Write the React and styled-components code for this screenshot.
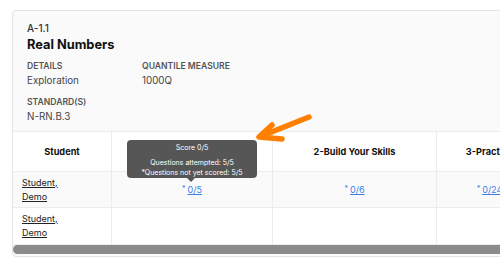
import React from "react";
import styled, { createGlobalStyle } from "styled-components";

const Global = createGlobalStyle`
  html, body { margin: 0; padding: 0; background: #fff; }
  body { font-family: Inter, "Liberation Sans", Arial, sans-serif; color: #1a1a1a; overflow: hidden; }
`;

const Page = styled.div`
  padding: 10px 0 0 12px;
  width: 500px;
  height: 258px;
  box-sizing: border-box;
  position: relative;
  overflow: hidden;
`;

const Card = styled.div`
  width: 540px;
  border: 1px solid #e4e4e4;
  border-radius: 4px;
  background: #fafafa;
  overflow: hidden;
`;

const Header = styled.div`
  padding: 11px 15px 0 14px;
  height: 120px;
  box-sizing: border-box;
`;

const Code = styled.div`
  font-size: 10px;
  font-weight: 500;
  color: #333;
  line-height: 13px;
`;

const Title = styled.h1`
  margin: 1px 0 0;
  font-size: 12.8px;
  font-weight: 700;
  color: #111;
  line-height: 18px;
`;

const MetaGrid = styled.div`
  display: grid;
  grid-template-columns: 115px 140px;
  row-gap: 7px;
  margin-top: 6px;
`;

const Meta = styled.div`
  display: flex;
  flex-direction: column;
`;

const Label = styled.div`
  font-size: 8.6px;
  font-weight: 600;
  color: #555;
  line-height: 12px;
`;

const Value = styled.div`
  font-size: 9.8px;
  color: #444;
  line-height: 17px;
`;

const Table = styled.div`
  display: grid;
  grid-template-columns: 99px 161px 164px 106px;
  background: #fff;
  border-top: 1px solid #ececec;
`;

const Cell = styled.div`
  height: ${(p) => p.h}px;
  box-sizing: border-box;
  border-right: 1px solid #ececec;
  border-bottom: 1px solid #ececec;
  background: ${(p) => (p.shade ? "#fafafa" : "#fff")};
  display: flex;
  align-items: center;
  justify-content: ${(p) => (p.left ? "flex-start" : "center")};
  padding: ${(p) => (p.left ? "0 9px" : "0")};
`;

const HeadText = styled.span`
  font-size: 9.2px;
  font-weight: 700;
  color: #111;
  white-space: nowrap;
`;

const StudentLink = styled.a`
  font-size: 9px;
  color: #222;
  text-decoration: underline;
  line-height: 14px;
`;

const Score = styled.span`
  font-size: 9px;
  color: #3d7ee6;
  white-space: nowrap;
`;

const Star = styled.span`
  font-size: 7px;
  vertical-align: 2px;
  margin-right: 2px;
`;

const ScoreLink = styled.a`
  text-decoration: underline;
`;

const ScrollBar = styled.div`
  height: 9px;
  margin: 0 0 2px 0;
  border-radius: 5px;
  background: #8b8b8b;
`;

const Tooltip = styled.div`
  position: absolute;
  left: 127px;
  top: 140px;
  width: 130px;
  height: 38px;
  box-sizing: border-box;
  background: #565656;
  border-radius: 4px;
  color: #fff;
  font-size: 7px;
  text-align: center;
  line-height: 10px;
  padding-top: 3px;
  &::after {
    content: "";
    position: absolute;
    left: 60px;
    bottom: -4px;
    border-left: 4px solid transparent;
    border-right: 4px solid transparent;
    border-top: 4px solid #565656;
  }
`;

const Gap = styled.div`
  height: 5px;
`;

const Arrow = styled.svg`
  position: absolute;
  left: 250px;
  top: 105px;
`;

export default function App() {
  return (
    <Page>
      <Global />
      <Card>
        <Header>
          <Code>A-1.1</Code>
          <Title>Real Numbers</Title>
          <MetaGrid>
            <Meta>
              <Label>DETAILS</Label>
              <Value>Exploration</Value>
            </Meta>
            <Meta>
              <Label>QUANTILE MEASURE</Label>
              <Value>1000Q</Value>
            </Meta>
            <Meta>
              <Label>STANDARD(S)</Label>
              <Value>N-RN.B.3</Value>
            </Meta>
          </MetaGrid>
        </Header>
        <Table>
          <Cell h={40}><HeadText>Student</HeadText></Cell>
          <Cell h={40}><HeadText>1-Explore</HeadText></Cell>
          <Cell h={40}><HeadText>2-Build Your Skills</HeadText></Cell>
          <Cell h={40}><HeadText>3-Practice</HeadText></Cell>

          <Cell h={36} shade left><StudentLink>Student,<br />Demo</StudentLink></Cell>
          <Cell h={36} shade><Score><Star>*</Star><ScoreLink>0/5</ScoreLink></Score></Cell>
          <Cell h={36} shade><Score><Star>*</Star><ScoreLink>0/6</ScoreLink></Score></Cell>
          <Cell h={36} shade><Score><Star>*</Star><ScoreLink>0/24</ScoreLink></Score></Cell>

          <Cell h={37} left><StudentLink>Student,<br />Demo</StudentLink></Cell>
          <Cell h={37} />
          <Cell h={37} />
          <Cell h={37} />
        </Table>
        <ScrollBar />
      </Card>
      <Tooltip>
        Score 0/5
        <Gap />
        Questions attempted: 5/5
        <br />
        *Questions not yet scored: 5/5
      </Tooltip>
      <Arrow width="70" height="45" viewBox="0 0 70 45">
        <path d="M59 12 L14 30" stroke="#ff7f00" strokeWidth="5.5" strokeLinecap="round" fill="none" />
        <path d="M22 20 L9 32 L32 34" stroke="#ff7f00" strokeWidth="5.5" strokeLinecap="round" strokeLinejoin="round" fill="none" />
      </Arrow>
    </Page>
  );
}
